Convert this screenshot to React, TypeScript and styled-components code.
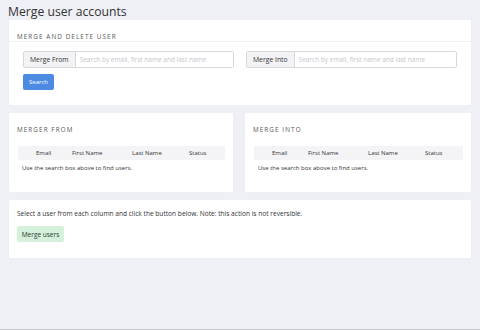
import styled, { createGlobalStyle } from "styled-components";

const GlobalStyle = createGlobalStyle`
  html, body {
    margin: 0;
    padding: 0;
    background: #eff0f5;
    font-family: "Open Sans", "Noto Sans", sans-serif;
    color: #333;
  }
  * { box-sizing: border-box; }
`;

const Page = styled.div`
  height: 330px;
  padding: 0 9px;
  border-bottom: 1px solid #c8c9cf;
`;

const Heading = styled.h1`
  margin: 0 0 0 -1px;
  height: 20px;
  line-height: 24px;
  font-size: 12.2px;
  font-weight: 400;
  color: #333;
`;

const Card = styled.section<{ $height: number }>`
  background: #fff;
  height: ${(p) => p.$height}px;
  border-radius: 1px;
  box-shadow: 0 0 1px rgba(0, 0, 0, 0.04);
`;

const CardHeader = styled.div<{ $line?: boolean }>`
  height: 22px;
  padding: 12px 8px 0;
  font-size: 6.3px;
  letter-spacing: 1.1px;
  text-transform: uppercase;
  color: #555;
  border-bottom: ${(p) => (p.$line ? "1px solid #f2f2f4" : "none")};
`;

const SearchBody = styled.div`
  padding: 9px 14px 0;
  display: flex;
  flex-direction: column;
  gap: 6px;
`;

const InputRow = styled.div`
  display: flex;
  gap: 12px;
`;

const InputGroup = styled.div`
  flex: 1;
  display: flex;
  height: 17px;
  border: 1px solid #d8d8dc;
  border-radius: 2px;
`;

const Addon = styled.span`
  display: flex;
  align-items: center;
  padding: 0 6px;
  background: #f3f3f6;
  border-right: 1px solid #d8d8dc;
  font-size: 6.8px;
  color: #333;
  white-space: nowrap;
`;

const Input = styled.input`
  flex: 1;
  min-width: 0;
  border: none;
  outline: none;
  padding: 0 4px;
  font-family: inherit;
  font-size: 6.5px;
  color: #333;
  background: #fff;
  &::placeholder { color: #c6c6cb; }
`;

const SearchButton = styled.button`
  align-self: flex-start;
  width: 31px;
  height: 16px;
  padding: 0;
  border: none;
  border-radius: 2px;
  background: #4d8be2;
  color: #fff;
  font-family: inherit;
  font-size: 6px;
`;

const Columns = styled.div`
  display: grid;
  grid-template-columns: 224px 226px;
  gap: 12px;
  margin: 8px 0;
`;

const TableBody = styled.div`
  padding: 11px 8px 0 9px;
`;

const Table = styled.table`
  width: 100%;
  border-collapse: collapse;
  table-layout: fixed;
  font-size: 6px;
  th {
    height: 14px;
    padding: 0;
    background: #f4f4f6;
    font-weight: 400;
    color: #333;
    text-align: left;
  }
  th:first-child { padding-left: 18px; }
`;

const Hint = styled.p`
  margin: 4px 0 0 4px;
  font-size: 6px;
  color: #333;
`;

const Footer = styled.div`
  padding: 9px 8px 0;
`;

const Note = styled.p`
  margin: 0;
  font-size: 6.6px;
  line-height: 10px;
  color: #333;
`;

const MergeButton = styled.button`
  margin-top: 7px;
  width: 47px;
  height: 16px;
  padding: 0;
  border: none;
  border-radius: 2px;
  background: #d5f1dc;
  color: #2c3a2f;
  font-family: inherit;
  font-size: 6.5px;
`;

const UserTable = ({ title }: { title: string }) => (
  <Card $height={79}>
    <CardHeader>{title}</CardHeader>
    <TableBody>
      <Table>
        <colgroup>
          <col style={{ width: 54 }} />
          <col style={{ width: 60 }} />
          <col style={{ width: 57 }} />
          <col />
        </colgroup>
        <thead>
          <tr>
            <th>Email</th>
            <th>First Name</th>
            <th>Last Name</th>
            <th>Status</th>
          </tr>
        </thead>
      </Table>
      <Hint>Use the search box above to find users.</Hint>
    </TableBody>
  </Card>
);

const App = () => {
  return (
    <>
      <GlobalStyle />
      <Page>
        <Heading>Merge user accounts</Heading>
        <Card $height={85}>
          <CardHeader $line>Merge and delete user</CardHeader>
          <SearchBody>
            <InputRow>
              <InputGroup>
                <Addon>Merge From</Addon>
                <Input placeholder="Search by email, first name and last name" />
              </InputGroup>
              <InputGroup>
                <Addon>Merge Into</Addon>
                <Input placeholder="Search by email, first name and last name" />
              </InputGroup>
            </InputRow>
            <SearchButton>Search</SearchButton>
          </SearchBody>
        </Card>
        <Columns>
          <UserTable title="Merger From" />
          <UserTable title="Merge Into" />
        </Columns>
        <Card $height={58}>
          <Footer>
            <Note>
              Select a user from each column and click the button below. Note:
              this action is not reversible.
            </Note>
            <MergeButton>Merge users</MergeButton>
          </Footer>
        </Card>
      </Page>
    </>
  );
};

export default App;
